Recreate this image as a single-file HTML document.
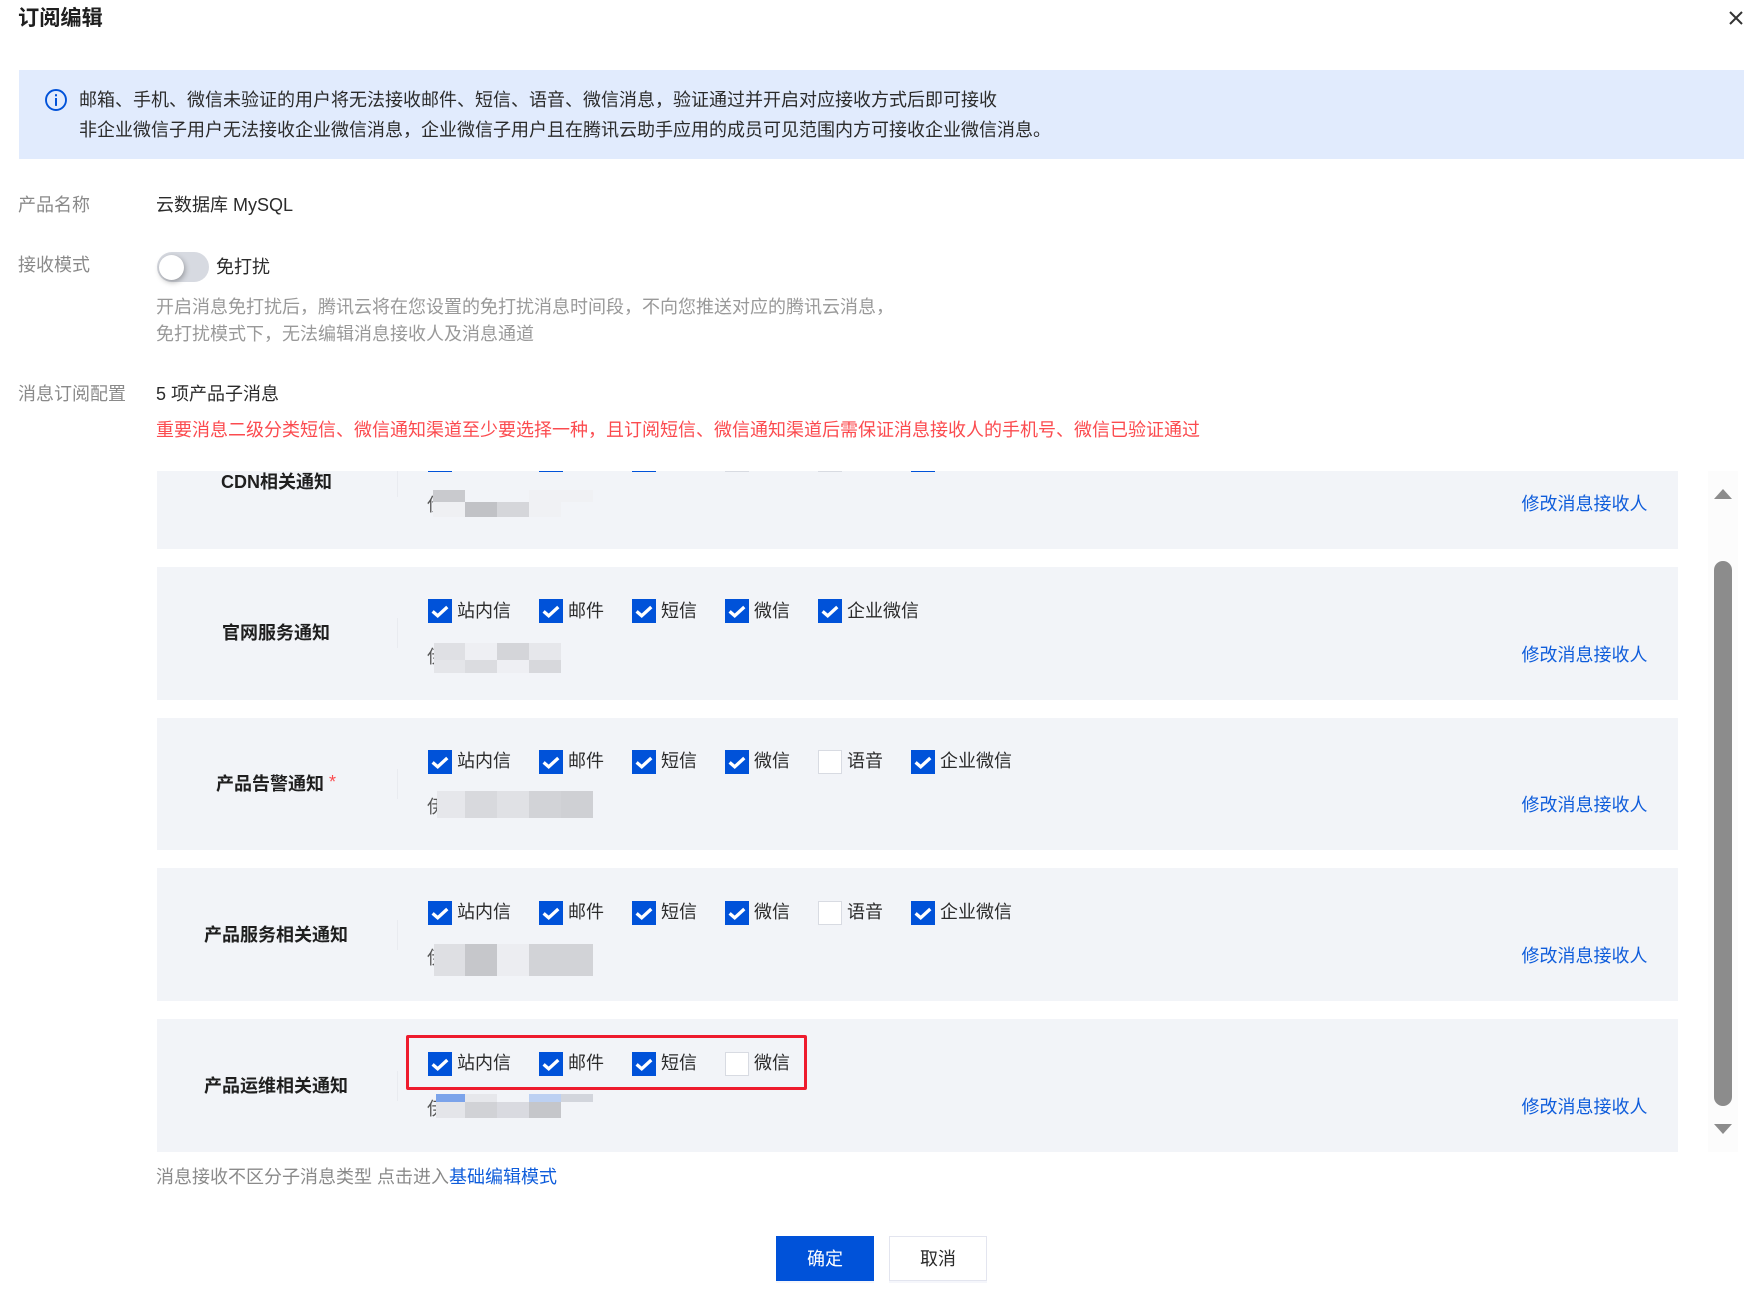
<!DOCTYPE html>
<html lang="zh-CN">
<head>
<meta charset="utf-8">
<title>订阅编辑</title>
<style>
html,body{margin:0;padding:0;background:#fff;}
body{width:1749px;height:1296px;position:relative;overflow:hidden;font-family:"Liberation Sans","Noto Sans CJK SC",sans-serif;font-size:18px;color:#2b2b2b;}
.t{position:absolute;height:30px;line-height:30px;white-space:nowrap;}
.g{color:#8a8a8a;}
.d{color:#999;}
.b{font-weight:700;color:#1f1f1f;}
.a{color:#0f5ddb;}
.row{position:absolute;left:157px;width:1521px;height:133px;background:#f2f4f8;}
.div{position:absolute;left:397px;width:1px;height:30px;background:#e9ebf0;}
.c{position:absolute;width:24px;height:24px;background:#0052d9;}
.c svg{display:block;width:24px;height:24px;}
.u{position:absolute;width:24px;height:24px;box-sizing:border-box;background:#fff;border:1px solid #d8dbe2;}
.m{position:absolute;}
</style>
</head>
<body>
<svg width="0" height="0" style="position:absolute"><defs><symbol id="ck" viewBox="0 0 24 24"><path d="M4.6 12.4L9.7 16.8L19.3 8" fill="none" stroke="#fff" stroke-width="3.3"/></symbol></defs></svg>

<div class="t b" style="left:18px;top:4px;font-size:21.2px;">订阅编辑</div>
<svg style="position:absolute;left:1728px;top:10px" width="16" height="16" viewBox="0 0 16 16"><path d="M2 2L14 14M14 2L2 14" stroke="#333" stroke-width="2" fill="none"/></svg>

<div style="position:absolute;left:19px;top:70px;width:1725px;height:89px;background:#e1ebfd;"></div>
<svg style="position:absolute;left:44px;top:88px" width="24" height="24" viewBox="0 0 24 24"><circle cx="12" cy="12" r="10" fill="none" stroke="#0052d9" stroke-width="1.9"/><rect x="11" y="6.2" width="2" height="2.1" fill="#0052d9"/><rect x="11" y="10" width="2" height="7.9" fill="#0052d9"/></svg>
<div class="t" style="left:79px;top:85px;">邮箱、手机、微信未验证的用户将无法接收邮件、短信、语音、微信消息，验证通过并开启对应接收方式后即可接收</div>
<div class="t" style="left:79px;top:115px;">非企业微信子用户无法接收企业微信消息，企业微信子用户且在腾讯云助手应用的成员可见范围内方可接收企业微信消息。</div>

<div class="t g" style="left:18px;top:190px;">产品名称</div>
<div class="t" style="left:156px;top:190px;">云数据库 MySQL</div>

<div class="t g" style="left:18px;top:250px;">接收模式</div>
<div style="position:absolute;left:157px;top:252px;width:52px;height:30px;border-radius:15px;background:#d7dae1;"></div>
<div style="position:absolute;left:159px;top:255px;width:25px;height:25px;border-radius:50%;background:#fff;box-shadow:1px 2px 6px rgba(0,0,0,.32);"></div>
<div class="t" style="left:216px;top:252px;">免打扰</div>
<div class="t d" style="left:156px;top:292px;">开启消息免打扰后，腾讯云将在您设置的免打扰消息时间段，不向您推送对应的腾讯云消息，</div>
<div class="t d" style="left:156px;top:319px;">免打扰模式下，无法编辑消息接收人及消息通道</div>

<div class="t g" style="left:18px;top:379px;">消息订阅配置</div>
<div class="t" style="left:156px;top:379px;">5 项产品子消息</div>
<div class="t" style="left:156px;top:415px;color:#fb4b4f;">重要消息二级分类短信、微信通知渠道至少要选择一种，且订阅短信、微信通知渠道后需保证消息接收人的手机号、微信已验证通过</div>

<!-- list -->
<div style="position:absolute;left:0;top:471px;width:1749px;height:681px;overflow:hidden;">
 <div style="position:absolute;left:0;top:-471px;width:1749px;height:1296px;">

  <!-- row 1 -->
  <div class="row" style="top:416px;"></div>
  <div class="t b" style="left:221px;top:467px;">CDN相关通知</div>
  <div class="div" style="top:467px;"></div>
  <div class="c" style="left:428px;top:448px;"></div>
  <div class="c" style="left:539px;top:448px;"></div>
  <div class="c" style="left:632px;top:448px;"></div>
  <div class="u" style="left:725px;top:448px;"></div>
  <div class="u" style="left:818px;top:448px;"></div>
  <div class="c" style="left:911px;top:448px;"></div>
  <div class="t" style="left:427px;top:490px;color:#555;">伊</div>
  <div class="m" style="left:433px;top:490px;width:32px;height:12px;background:#c9cace;"></div>
  <div class="m" style="left:433px;top:502px;width:32px;height:15px;background:#eff0f3;"></div>
  <div class="m" style="left:465px;top:502px;width:32px;height:15px;background:#c1c2c6;"></div>
  <div class="m" style="left:497px;top:502px;width:32px;height:15px;background:#d5d6da;"></div>
  <div class="m" style="left:529px;top:490px;width:32px;height:27px;background:#f0f1f4;"></div>
  <div class="m" style="left:561px;top:490px;width:32px;height:12px;background:#f0f1f4;"></div>
  <div class="t a" style="left:1521.5px;top:489px;">修改消息接收人</div>

  <!-- row 2 -->
  <div class="row" style="top:567px;"></div>
  <div class="t b" style="left:222px;top:618px;">官网服务通知</div>
  <div class="div" style="top:618px;"></div>
  <div class="c" style="left:428px;top:599px;"><svg><use href="#ck"/></svg></div><div class="t" style="left:457px;top:596px;">站内信</div>
  <div class="c" style="left:539px;top:599px;"><svg><use href="#ck"/></svg></div><div class="t" style="left:568px;top:596px;">邮件</div>
  <div class="c" style="left:632px;top:599px;"><svg><use href="#ck"/></svg></div><div class="t" style="left:661px;top:596px;">短信</div>
  <div class="c" style="left:725px;top:599px;"><svg><use href="#ck"/></svg></div><div class="t" style="left:754px;top:596px;">微信</div>
  <div class="c" style="left:818px;top:599px;"><svg><use href="#ck"/></svg></div><div class="t" style="left:847px;top:596px;">企业微信</div>
  <div class="t" style="left:427px;top:642px;color:#555;">伊</div>
  <div class="m" style="left:434px;top:643px;width:31px;height:17px;background:#dfe0e4;"></div>
  <div class="m" style="left:465px;top:643px;width:32px;height:17px;background:#eeeff3;"></div>
  <div class="m" style="left:497px;top:643px;width:32px;height:17px;background:#d4d5d9;"></div>
  <div class="m" style="left:529px;top:643px;width:32px;height:17px;background:#e6e7eb;"></div>
  <div class="m" style="left:434px;top:660px;width:31px;height:13px;background:#e4e5e9;"></div>
  <div class="m" style="left:465px;top:660px;width:32px;height:13px;background:#dbdce0;"></div>
  <div class="m" style="left:497px;top:660px;width:32px;height:13px;background:#eeeff3;"></div>
  <div class="m" style="left:529px;top:660px;width:32px;height:13px;background:#d7d8dc;"></div>
  <div class="t a" style="left:1521.5px;top:640px;">修改消息接收人</div>

  <!-- row 3 -->
  <div class="row" style="top:718px;height:132px;"></div>
  <div class="t b" style="left:216px;top:769px;">产品告警通知</div>
  <div class="t" style="left:329px;top:767px;color:#fb4b4f;font-size:18px;">*</div>
  <div class="div" style="top:769px;"></div>
  <div class="c" style="left:428px;top:750px;"><svg><use href="#ck"/></svg></div><div class="t" style="left:457px;top:746px;">站内信</div>
  <div class="c" style="left:539px;top:750px;"><svg><use href="#ck"/></svg></div><div class="t" style="left:568px;top:746px;">邮件</div>
  <div class="c" style="left:632px;top:750px;"><svg><use href="#ck"/></svg></div><div class="t" style="left:661px;top:746px;">短信</div>
  <div class="c" style="left:725px;top:750px;"><svg><use href="#ck"/></svg></div><div class="t" style="left:754px;top:746px;">微信</div>
  <div class="u" style="left:818px;top:750px;"></div><div class="t" style="left:847px;top:746px;">语音</div>
  <div class="c" style="left:911px;top:750px;"><svg><use href="#ck"/></svg></div><div class="t" style="left:940px;top:746px;">企业微信</div>
  <div class="t" style="left:427px;top:792px;color:#555;">伊</div>
  <div class="m" style="left:437px;top:791px;width:28px;height:27px;background:#e6e7eb;"></div>
  <div class="m" style="left:465px;top:791px;width:32px;height:27px;background:#d8d9dd;"></div>
  <div class="m" style="left:497px;top:791px;width:32px;height:27px;background:#e0e1e5;"></div>
  <div class="m" style="left:529px;top:791px;width:32px;height:27px;background:#d2d3d7;"></div>
  <div class="m" style="left:561px;top:791px;width:32px;height:27px;background:#cfd0d4;"></div>
  <div class="t a" style="left:1521.5px;top:790px;">修改消息接收人</div>

  <!-- row 4 -->
  <div class="row" style="top:868px;"></div>
  <div class="t b" style="left:204px;top:920px;">产品服务相关通知</div>
  <div class="div" style="top:920px;"></div>
  <div class="c" style="left:428px;top:901px;"><svg><use href="#ck"/></svg></div><div class="t" style="left:457px;top:897px;">站内信</div>
  <div class="c" style="left:539px;top:901px;"><svg><use href="#ck"/></svg></div><div class="t" style="left:568px;top:897px;">邮件</div>
  <div class="c" style="left:632px;top:901px;"><svg><use href="#ck"/></svg></div><div class="t" style="left:661px;top:897px;">短信</div>
  <div class="c" style="left:725px;top:901px;"><svg><use href="#ck"/></svg></div><div class="t" style="left:754px;top:897px;">微信</div>
  <div class="u" style="left:818px;top:901px;"></div><div class="t" style="left:847px;top:897px;">语音</div>
  <div class="c" style="left:911px;top:901px;"><svg><use href="#ck"/></svg></div><div class="t" style="left:940px;top:897px;">企业微信</div>
  <div class="t" style="left:427px;top:943px;color:#555;">伊</div>
  <div class="m" style="left:434px;top:944px;width:31px;height:32px;background:#dedfe3;"></div>
  <div class="m" style="left:465px;top:944px;width:32px;height:32px;background:#c6c7cb;"></div>
  <div class="m" style="left:497px;top:944px;width:32px;height:32px;background:#ecedf1;"></div>
  <div class="m" style="left:529px;top:944px;width:64px;height:32px;background:#d2d3d7;"></div>
  <div class="t a" style="left:1521.5px;top:941px;">修改消息接收人</div>

  <!-- row 5 -->
  <div class="row" style="top:1019px;"></div>
  <div class="t b" style="left:204px;top:1071px;">产品运维相关通知</div>
  <div class="div" style="top:1071px;"></div>
  <div class="c" style="left:428px;top:1052px;"><svg><use href="#ck"/></svg></div><div class="t" style="left:457px;top:1048px;">站内信</div>
  <div class="c" style="left:539px;top:1052px;"><svg><use href="#ck"/></svg></div><div class="t" style="left:568px;top:1048px;">邮件</div>
  <div class="c" style="left:632px;top:1052px;"><svg><use href="#ck"/></svg></div><div class="t" style="left:661px;top:1048px;">短信</div>
  <div class="u" style="left:725px;top:1052px;"></div><div class="t" style="left:754px;top:1048px;">微信</div>
  <div style="position:absolute;left:406px;top:1035px;width:401px;height:55px;box-sizing:border-box;border:3.5px solid #ee1b2d;border-radius:2px;"></div>
  <div class="t" style="left:427px;top:1094px;color:#555;">伊</div>
  <div class="m" style="left:436px;top:1094px;width:29px;height:8px;background:#7ba3ea;"></div>
  <div class="m" style="left:465px;top:1094px;width:32px;height:8px;background:#e6e7eb;"></div>
  <div class="m" style="left:529px;top:1094px;width:32px;height:8px;background:#bcd0f2;"></div>
  <div class="m" style="left:561px;top:1094px;width:32px;height:8px;background:#d2d5dc;"></div>
  <div class="m" style="left:436px;top:1102px;width:29px;height:16px;background:#e4e5e9;"></div>
  <div class="m" style="left:465px;top:1102px;width:32px;height:16px;background:#d1d2d6;"></div>
  <div class="m" style="left:497px;top:1102px;width:32px;height:16px;background:#d9dae0;"></div>
  <div class="m" style="left:529px;top:1102px;width:32px;height:16px;background:#c5c6ca;"></div>
  <div class="t a" style="left:1521.5px;top:1092px;">修改消息接收人</div>

  <!-- scrollbar -->
  <div class="m" style="left:1708px;top:471px;width:30px;height:681px;background:#fcfcfc;"></div>
  <div class="m" style="left:1714px;top:561px;width:18px;height:545px;border-radius:9px;background:#8c8c8c;"></div>
  <svg style="position:absolute;left:1714px;top:489px" width="18" height="10" viewBox="0 0 18 10"><path d="M9 0L18 10H0Z" fill="#8c8c8c"/></svg>
  <svg style="position:absolute;left:1714px;top:1124px" width="18" height="10" viewBox="0 0 18 10"><path d="M0 0H18L9 10Z" fill="#8c8c8c"/></svg>
 </div>
</div>

<div class="t g" style="left:156px;top:1162px;">消息接收不区分子消息类型 点击进入<span class="a">基础编辑模式</span></div>

<div style="position:absolute;left:776px;top:1236px;width:98px;height:45px;line-height:47px;text-align:center;background:#0052d9;color:#fff;box-shadow:0 2px 0 #f5f6fb;">确定</div>
<div style="position:absolute;left:889px;top:1236px;width:98px;height:45px;line-height:45px;box-sizing:border-box;border:1px solid #e3e5ef;text-align:center;background:#fff;color:#2b2b2b;box-shadow:0 2px 0 #f5f6fb;">取消</div>
</body>
</html>
